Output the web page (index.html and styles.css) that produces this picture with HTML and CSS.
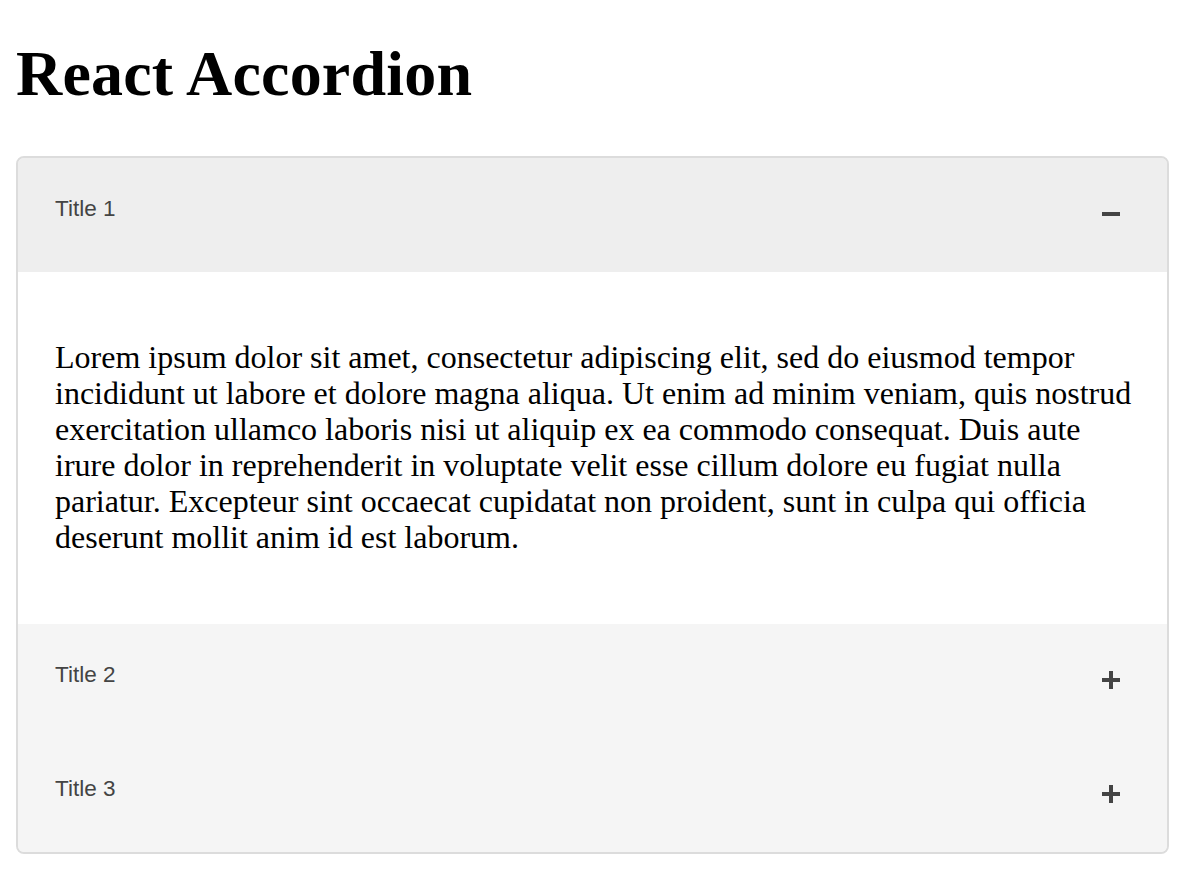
FILE: index.html
```html
<!DOCTYPE html>
<html lang="en">
<head>
<meta charset="utf-8">
<title>React Accordion</title>
<link rel="stylesheet" href="styles.css">
</head>
<body>
<h1 class="page-title">React Accordion</h1>
<div class="accordion">
  <div class="acc-item is-open">
    <div class="acc-header">
      <span class="acc-title">Title 1</span>
      <span class="acc-icon icon-minus"></span>
    </div>
    <div class="acc-body">
      <p class="acc-text">Lorem ipsum dolor sit amet, consectetur adipiscing elit, sed do eiusmod tempor incididunt ut labore et dolore magna aliqua. Ut enim ad minim veniam, quis nostrud exercitation ullamco laboris nisi ut aliquip ex ea commodo consequat. Duis aute irure dolor in reprehenderit in voluptate velit esse cillum dolore eu fugiat nulla pariatur. Excepteur sint occaecat cupidatat non proident, sunt in culpa qui officia deserunt mollit anim id est laborum.</p>
    </div>
  </div>
  <div class="acc-item">
    <div class="acc-header">
      <span class="acc-title">Title 2</span>
      <span class="acc-icon icon-plus"></span>
    </div>
  </div>
  <div class="acc-item">
    <div class="acc-header">
      <span class="acc-title">Title 3</span>
      <span class="acc-icon icon-plus"></span>
    </div>
  </div>
</div>
</body>
</html>
```

FILE: styles.css
```css
html, body {
  margin: 0;
  padding: 0;
  background: #ffffff;
}

body {
  font-family: "Liberation Serif", "Times New Roman", serif;
  color: #000;
}

.page-title {
  font-family: "Liberation Serif", "Times New Roman", serif;
  font-size: 64px;
  font-weight: bold;
  line-height: 74px;
  letter-spacing: 0.2px;
  margin: 37px 16px 45px;
}

.accordion {
  margin: 0 15px 0 16px;
  border: 2px solid #dcdcdc;
  border-radius: 8px;
  overflow: hidden;
  background: #f5f5f5;
}

.acc-header {
  box-sizing: border-box;
  height: 114px;
  padding: 37px 47px 0 37px;
  display: flex;
  justify-content: space-between;
  align-items: flex-start;
  background: #f5f5f5;
}

.is-open .acc-header {
  background: #eeeeee;
}

.acc-title {
  font-family: "Liberation Sans", Arial, sans-serif;
  font-size: 22.5px;
  line-height: 27px;
  color: #444444;
}

.acc-icon {
  position: relative;
  width: 18px;
  height: 18px;
  margin-top: 10px;
  flex: none;
}

.acc-icon::before,
.acc-icon::after {
  content: "";
  position: absolute;
  background: #444444;
}

.acc-icon::before {
  left: 0;
  top: 7px;
  width: 18px;
  height: 4px;
}

.icon-plus::after {
  left: 7px;
  top: 0;
  width: 4px;
  height: 18px;
}

.icon-minus::after {
  display: none;
}

.acc-body {
  background: #ffffff;
  padding: 67px 34px 69px 37px;
}

.acc-text {
  margin: 0;
  font-size: 32px;
  line-height: 36px;
}
```
